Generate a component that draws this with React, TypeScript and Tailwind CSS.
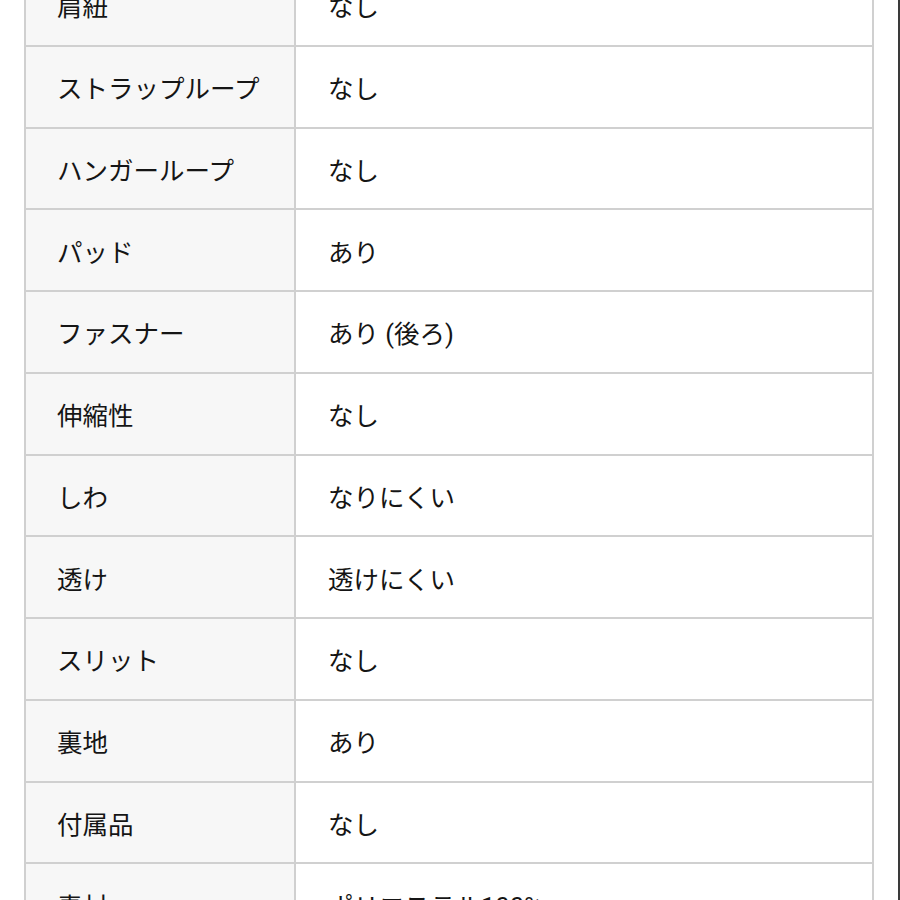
import React from 'react';

const rows: [string, string][] = [
  ['肩紐', 'なし'],
  ['ストラップループ', 'なし'],
  ['ハンガーループ', 'なし'],
  ['パッド', 'あり'],
  ['ファスナー', 'あり (後ろ)'],
  ['伸縮性', 'なし'],
  ['しわ', 'なりにくい'],
  ['透け', '透けにくい'],
  ['スリット', 'なし'],
  ['裏地', 'あり'],
  ['付属品', 'なし'],
  ['素材', 'ポリエステル100%'],
];

export default function App() {
  return (
    <div
      className="w-[900px] h-[900px] overflow-hidden bg-white flex"
      style={{ fontFamily: '"Roboto", "Noto Sans CJK JP", sans-serif' }}
    >
      <div className="flex-1 pl-[24px] pr-[24px]">
        <div className="-mt-[35px] border-l-2 border-r-2 border-[#d0d0d0]">
          {rows.map(([label, value]) => (
            <div key={label} className="grid grid-cols-[270px_1fr] h-[81.75px] border-b-2 border-[#d0d0d0]">
              <div className="bg-[#f7f7f7] border-r-2 border-[#d0d0d0] flex items-center pl-[31px] pt-[5px] text-[25.5px] text-[#151515]">
                {label}
              </div>
              <div className="flex items-center pl-[32px] pt-[5px] text-[25.5px] text-[#151515]">{value}</div>
            </div>
          ))}
        </div>
      </div>
      <div className="w-[2px] h-full bg-[#3a3a3a]" />
    </div>
  );
}
